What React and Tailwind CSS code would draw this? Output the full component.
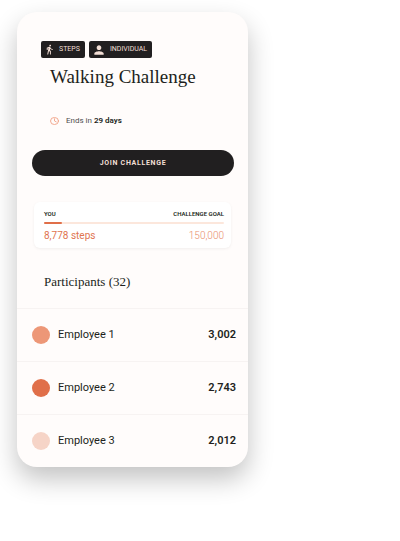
import React from "react";
import { MdDirectionsWalk, MdPerson } from "react-icons/md";

const challenge = {
  title: "Walking Challenge",
  daysLeft: 29,
  steps: 8778,
  goal: 150000,
  progress: 10,
  participantCount: 32,
};

const participants = [
  { id: 1, name: "Employee 1", steps: 3002, color: "bg-[#ed9777]" },
  { id: 2, name: "Employee 2", steps: 2743, color: "bg-[#e06f49]" },
  { id: 3, name: "Employee 3", steps: 2012, color: "bg-[#f6d4c7]" },
];

const formatNumber = (value) => value.toLocaleString("en-US");

const ClockIcon = () => (
  <svg
    viewBox="0 0 20 18"
    className="h-2 w-[9px] shrink-0 text-[#f0a084]"
    fill="none"
    stroke="currentColor"
    strokeWidth="2"
    strokeLinecap="round"
    aria-hidden="true"
  >
    <ellipse cx="10" cy="9" rx="9" ry="8" />
    <path d="M10 4v5l4 2" />
  </svg>
);

const Badge = ({ icon, children }) => (
  <span className="flex h-[17px] items-center gap-1 rounded-xs bg-[#211f20] pr-[5px] pl-[3px] text-[7px] text-[#f3dfd6]">
    {icon}
    <span>{children}</span>
  </span>
);

const App = () => {
  return (
    <div className="min-h-screen bg-white px-[17px] py-3 font-['Roboto',sans-serif] text-[#211f20]">
      <main className="w-full max-w-[231px] overflow-hidden rounded-[20px] bg-[#fffcfb] shadow-[0_12px_26px_rgba(0,0,0,0.24)]">
        {/* Header */}
        <header className="px-6 pt-[29px]">
          <div className="flex gap-1">
            <Badge icon={<MdDirectionsWalk size={11} />}>STEPS</Badge>
            <Badge icon={<MdPerson size={14} />}>INDIVIDUAL</Badge>
          </div>
          <h1 className="mt-[5px] pl-[9px] font-['Liberation_Serif',serif] text-[19px] leading-7">
            {challenge.title}
          </h1>
          <div className="mt-6 flex items-center gap-[7px] pl-[9px] text-[8px] leading-3">
            <ClockIcon />
            <p>
              <span className="text-[#4f4d4e]">Ends in </span>
              <strong className="font-semibold">
                {challenge.daysLeft} days
              </strong>
            </p>
          </div>
        </header>

        <div className="mt-[21px] pr-[14px] pl-[15px]">
          <button
            type="button"
            className="h-[26px] w-full rounded-full bg-[#211f20] text-[7px] font-bold tracking-widest text-[#f3dfd6]"
          >
            JOIN CHALLENGE
          </button>
        </div>

        {/* Progress */}
        <section className="mx-[17px] mt-[26px] rounded-md bg-white pt-2 pr-[7px] pb-1 pl-[10px] shadow-[0_1px_3px_rgba(0,0,0,0.06)]">
          <div className="flex justify-between text-[6px] leading-2 font-semibold">
            <span>YOU</span>
            <span>CHALLENGE GOAL</span>
          </div>
          <div className="mt-1 h-0.5 rounded-full bg-[#fce7dc]">
            <div
              className="h-full rounded-full bg-[#e06f49]"
              style={{ width: `${challenge.progress}%` }}
            />
          </div>
          <div className="mt-1 flex justify-between text-[10px] leading-4">
            <span className="text-[#e07450]">
              {formatNumber(challenge.steps)} steps
            </span>
            <span className="font-light text-[#e98d6c]">
              {formatNumber(challenge.goal)}
            </span>
          </div>
        </section>

        {/* Participants */}
        <section>
          <h2 className="mt-6 mb-4 pl-[27px] font-['Liberation_Serif',serif] text-[13px] leading-5">
            Participants ({challenge.participantCount})
          </h2>
          <ul>
            {participants.map((participant) => (
              <li
                key={participant.id}
                className="flex h-[53px] items-center border-t border-[#f7f3f2] pr-3 pl-[15px] text-[11px]"
              >
                <span
                  className={`mr-2 size-[18px] rounded-full ${participant.color}`}
                />
                <span>{participant.name}</span>
                <span className="ml-auto font-semibold">
                  {formatNumber(participant.steps)}
                </span>
              </li>
            ))}
          </ul>
        </section>
      </main>
    </div>
  );
};

export default App;
